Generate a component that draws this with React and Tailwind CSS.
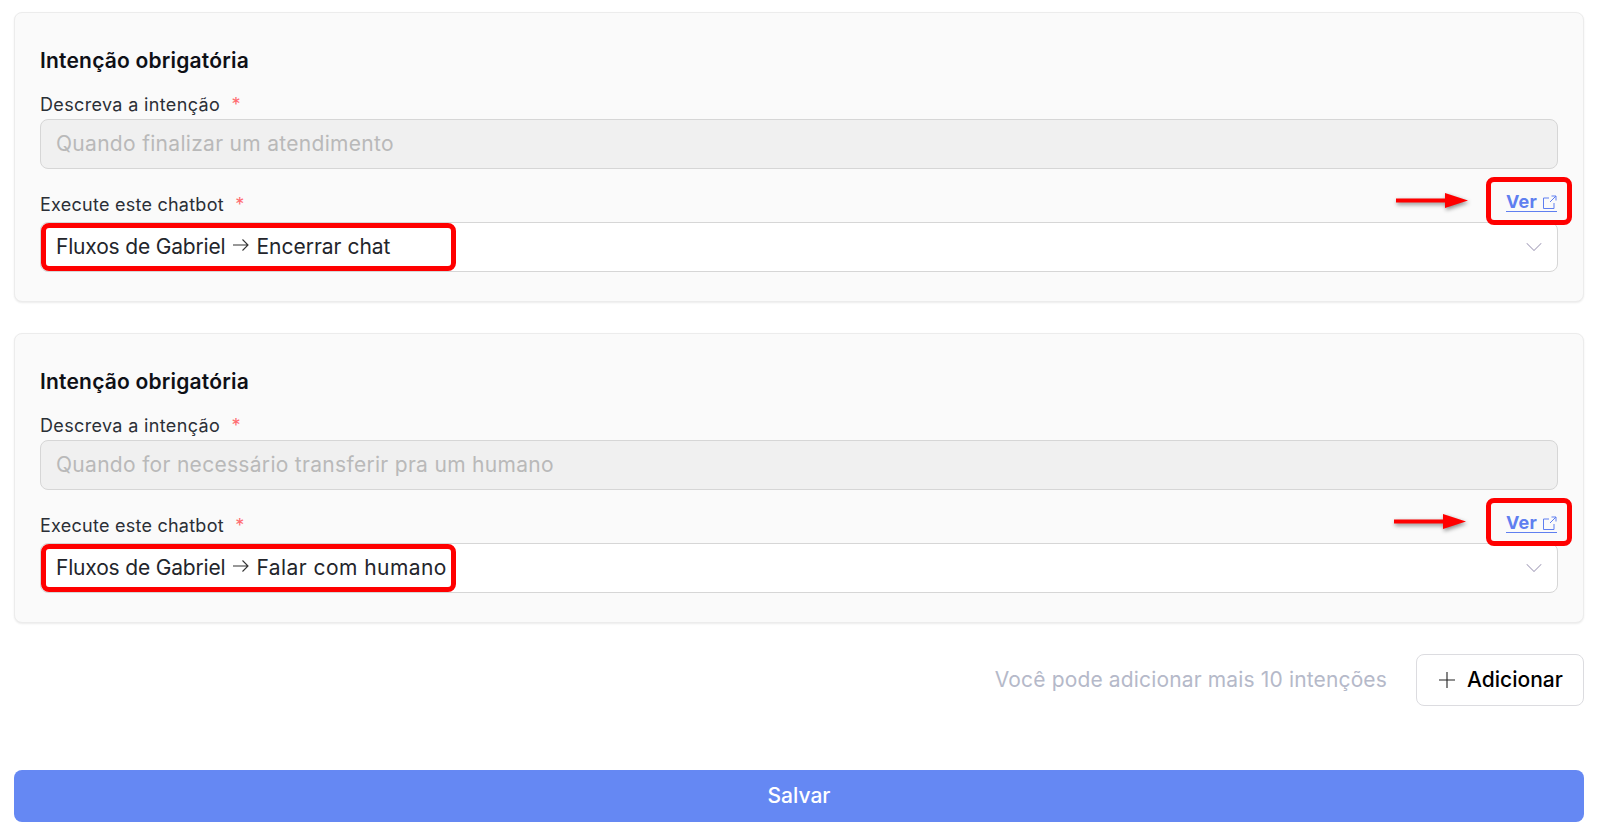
import { ChevronDown } from "lucide-react";

function SetaFluxo() {
  return (
    <svg width="18" height="14" viewBox="0 0 18 14" fill="none" stroke="#333" strokeWidth="1.1" className="ml-[7px] mr-[6px] -mt-[5px]">
      <path d="M1 7h15M10.5 1.5 16 7l-5.5 5.5" />
    </svg>
  );
}

function SetaVermelha({ deslocamento }) {
  return (
    <svg
      width="76"
      height="22"
      viewBox="0 0 76 22"
      className={`absolute top-[-33px] ${deslocamento} drop-shadow-[1px_2px_2px_rgba(0,0,0,0.45)]`}
    >
      <path d="M0 8.5h49V3l23 7.5L49 18v-5.5H0z" fill="#ff0000" />
    </svg>
  );
}

function Intencao({ descricao, fluxo, espacoFluxo, deslocamento }) {
  return (
    <div className="bg-[#fafafa] border border-[#ececec] rounded-lg shadow-[0_1px_2px_rgba(0,0,0,0.08)] px-[25px] pt-[33px] pb-[29px]">
      <h2 className="text-[21px] leading-[30px] font-semibold text-[#0e1016] mb-[17px] tracking-[0.2px]">
        Intenção obrigatória
      </h2>

      <label className="block text-[18px] leading-[24px] tracking-[0.35px] text-[#2b2f36] mb-[2px]">
        Descreva a intenção <span className="text-[#ff6b70] ml-[6px]">*</span>
      </label>
      <div className="h-[50px] flex items-center px-[15px] bg-[#f0f0f0] border border-[#d6d6d6] rounded-lg text-[21px] tracking-[0.3px] text-[#b9b9b9]">
        {descricao}
      </div>

      <label className="block text-[18px] leading-[24px] tracking-[0.25px] text-[#2b2f36] mt-[24px] mb-[5px]">
        Execute este chatbot <span className="text-[#ff6b70] ml-[6px]">*</span>
      </label>
      <div className="relative h-[50px] flex items-center justify-between pl-[15px] pr-[9px] bg-white border border-[#d6d6d6] rounded-lg text-[21px] text-[#23252b]">
        <span className="flex items-center">
          <span className="tracking-[-0.18px]">Fluxos de Gabriel</span>
          <SetaFluxo />
          <span className={espacoFluxo}>{fluxo}</span>
        </span>
        <ChevronDown size={28} strokeWidth={0.9} className="text-[#a9a3bd]" />

        <div className="absolute left-0 top-0 w-[415px] h-[48px] border-[5px] border-[#ff0000] rounded-lg" />
        <SetaVermelha deslocamento={deslocamento} />
        <div className="absolute right-[-15px] top-[-46px] w-[86px] h-[48px] border-[5px] border-[#ff0000] rounded-lg" />
        <a className="absolute right-0 top-[-30px] flex items-center gap-[5px] border-b border-[#5f7ff0] leading-[18px] text-[18px] font-bold tracking-[0.2px] text-[#5f7ff0]">
          Ver
          <svg width="15" height="15" viewBox="0 0 15 15" fill="none" stroke="#5f7ff0" strokeWidth="1">
            <path d="M7 3H1.5v10.5H12V8M8 7l6-6M9.5 1H14v4.5" />
          </svg>
        </a>
      </div>
    </div>
  );
}

export default function App() {
  return (
    <div className="min-h-[835px] bg-white pt-[12px] pl-[14px] pr-[15px] font-['Inter',sans-serif]">
      <Intencao descricao="Quando finalizar um atendimento" fluxo="Encerrar chat" espacoFluxo="tracking-normal" deslocamento="right-[85px]" />
      <div className="mt-[31px]">
        <Intencao descricao="Quando for necessário transferir pra um humano" fluxo="Falar com humano" espacoFluxo="tracking-[0.45px]" deslocamento="right-[87px]" />
      </div>

      <div className="mt-[31px] flex items-center justify-end">
        <span className="text-[21px] tracking-[0.15px] text-[#b5b9c9] mr-[29px]">Você pode adicionar mais 10 intenções</span>
        <button className="w-[168px] h-[52px] flex items-center justify-center gap-[12px] pl-[2px] bg-white border border-[#dcdce0] rounded-lg text-[21px] font-medium text-black">
          <svg width="16" height="16" viewBox="0 0 16 16" fill="none" stroke="#222" strokeWidth="1.1">
            <path d="M8 0v16M0 8h16" />
          </svg>
          Adicionar
        </button>
      </div>

      <button className="mt-[64px] w-full h-[52px] bg-[#6588f3] rounded-lg text-[21px] font-medium text-white">
        Salvar
      </button>
    </div>
  );
}
